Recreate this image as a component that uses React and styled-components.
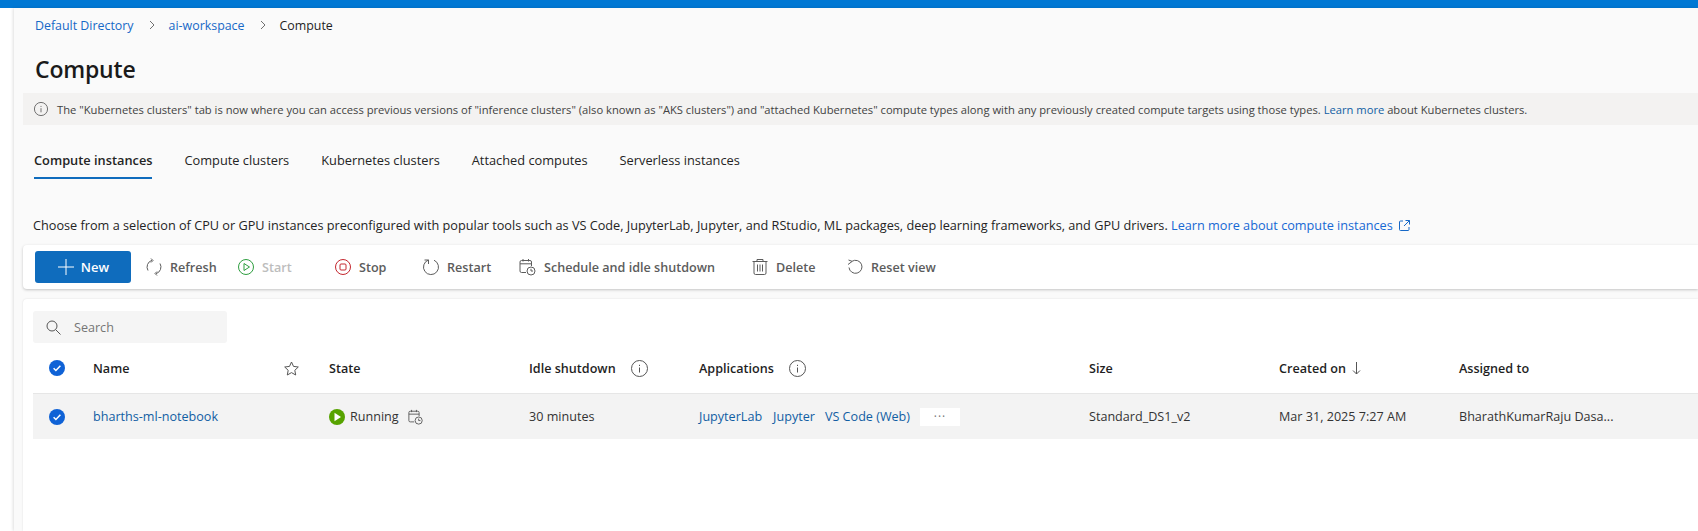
import React from "react";
import styled, { createGlobalStyle } from "styled-components";

const GlobalStyle = createGlobalStyle`
  html, body { margin: 0; padding: 0; background: #fff; }
  body { font-family: "Open Sans", "Noto Sans", "Liberation Sans", sans-serif; color: #242424; }
`;

const Page = styled.div`
  width: 1698px;
  height: 531px;
  overflow: hidden;
  display: flex;
  flex-direction: column;
  background: #fff;
`;
const TopBar = styled.div`
  height: 8px;
  flex: none;
  background: #0078d4;
`;
const Body = styled.div`
  flex: 1;
  display: flex;
  min-height: 0;
  padding-left: 14px;
`;
const Main = styled.main`
  flex: 1;
  min-width: 0;
  background: #fafafa;
  box-shadow: -1px 0 3px rgba(0, 0, 0, 0.13);
  display: flex;
  flex-direction: column;
`;
const Crumbs = styled.nav`
  display: flex;
  align-items: center;
  height: 34px;
  padding-left: 21px;
  font-size: 12.4px;
`;
const Crumb = styled.span`
  color: ${(p) => (p.$current ? "#1f1f1f" : "#1668c7")};
`;
const CrumbSep = styled.svg`
  width: 10px;
  height: 10px;
  margin: 0 12px 0 13px;
  fill: none;
  stroke: #707070;
  stroke-width: 1;
`;
const Title = styled.h1`
  margin: 12px 0 0 21px;
  font-size: 23px;
  line-height: 30px;
  font-weight: 600;
  color: #1a1a1a;
  letter-spacing: -0.2px;
`;
const Banner = styled.div`
  margin: 9px 0 0 9px;
  height: 32px;
  background: #f3f2f1;
  display: flex;
  align-items: center;
  gap: 9px;
  padding-left: 11px;
  font-size: 11.2px;
  color: #424242;
  white-space: pre;
`;
const InlineLink = styled.a`
  color: ${(p) => p.$color || "#115ea3"};
`;
const Tabs = styled.div`
  display: flex;
  gap: 32px;
  margin: 21px 0 0 20px;
  height: 33px;
`;
const Tab = styled.div`
  height: 33px;
  box-sizing: border-box;
  padding-top: 5px;
  font-size: 12.8px;
  line-height: 18px;
  font-weight: ${(p) => (p.$active ? 600 : 400)};
  color: #242424;
  border-bottom: 2px solid ${(p) => (p.$active ? "#0f6cbd" : "transparent")};
`;
const Description = styled.p`
  margin: 37px 0 0 19px;
  font-size: 12.7px;
  line-height: 18px;
  color: #242424;
  display: flex;
  align-items: center;
  white-space: pre;
`;
const ExternalIcon = styled.svg`
  width: 11px;
  height: 11px;
  margin-left: 6px;
  fill: none;
  stroke: #1668c7;
  stroke-width: 1;
`;
const Toolbar = styled.div`
  margin: 11px 0 0 9px;
  height: 44px;
  flex: none;
  background: #fff;
  border-radius: 4px 0 0 4px;
  box-shadow: 0 1px 3px rgba(0, 0, 0, 0.22);
  display: flex;
  align-items: center;
  padding-left: 12px;
`;
const NewButton = styled.button`
  width: 96px;
  height: 32px;
  border: 0;
  border-radius: 3px;
  background: #0f6cbd;
  color: #fff;
  font: 600 13px "Open Sans", sans-serif;
  display: flex;
  align-items: center;
  justify-content: center;
  gap: 6px;
  padding: 0;
  margin-right: ${(p) => p.$after}px;
`;
const Action = styled.div`
  display: flex;
  align-items: center;
  width: ${(p) => p.$width}px;
  font-size: 12.6px;
  font-weight: 600;
  color: ${(p) => (p.$disabled ? "#bdbdbd" : "#5c5c5c")};
  white-space: nowrap;
`;
const ActionIcon = styled.svg`
  width: 18px;
  height: 18px;
  flex: none;
  margin-right: 7px;
  fill: none;
  stroke: ${(p) => p.$color || "#5c5c5c"};
  stroke-width: 1;
`;
const Panel = styled.section`
  margin: 10px 0 0 9px;
  flex: 1;
  background: #fff;
  border-radius: 4px 0 0 0;
  box-shadow: 0 0 2px rgba(0, 0, 0, 0.12);
  padding: 12px 0 0 10px;
`;
const SearchBox = styled.div`
  width: 194px;
  height: 32px;
  background: #f5f5f5;
  border-radius: 3px;
  display: flex;
  align-items: center;
  gap: 13px;
  padding-left: 13px;
  box-sizing: border-box;
  font-size: 12.6px;
  color: #757575;
`;
const Row = styled.div`
  display: grid;
  grid-template-columns: 60px 191px 45px 200px 170px 390px 190px 180px 1fr;
  align-items: center;
  font-size: ${(p) => (p.$head ? "12.6px" : "12.6px")};
  font-weight: ${(p) => (p.$head ? 600 : 400)};
  color: ${(p) => (p.$head ? "#1f1f1f" : "#333")};
  height: ${(p) => (p.$head ? "51px" : "45px")};
  background: ${(p) => (p.$head ? "transparent" : "#f3f3f3")};
  border-bottom: ${(p) => (p.$head ? "1px solid #e6e6e6" : "0")};
  white-space: nowrap;
  box-sizing: border-box;
`;
const CheckCell = styled.div`
  display: flex;
  padding-left: 16px;
`;
const Cell = styled.div`
  display: flex;
  align-items: center;
`;
const HeadInfo = styled.svg`
  width: 17px;
  height: 17px;
  margin-left: ${(p) => p.$gap}px;
  fill: none;
  stroke: #555;
  stroke-width: 1;
`;
const TableLink = styled.a`
  color: #115ea3;
  margin-right: ${(p) => p.$gap || 0}px;
`;
const MoreButton = styled.span`
  width: 40px;
  height: 18px;
  margin-left: 10px;
  background: #fff;
  color: #777;
  display: flex;
  align-items: center;
  justify-content: center;
  font-size: 12px;
  line-height: 12px;
  letter-spacing: 1px;
`;
const SmallSvg = styled.svg`
  flex: none;
  margin: ${(p) => p.$margin || 0};
`;

const Check = () => (
  <SmallSvg width="16" height="16" viewBox="0 0 16 16">
    <circle cx="8" cy="8" r="8" fill="#0f62d6" />
    <path d="M4.6 8.2l2.3 2.3 4.5-4.8" fill="none" stroke="#fff" strokeWidth="1.5" />
  </SmallSvg>
);
const Info = ({ size = 17 }) => (
  <>
    <circle cx="8.5" cy="8.5" r="8" />
    <path d="M8.5 7.5v5M8.5 4.8v1.2" />
  </>
);
const CalendarClock = () => (
  <>
    <path d="M12.5 8V4a1.5 1.5 0 0 0-1.5-1.5H2.5A1.5 1.5 0 0 0 1 4v9a1.5 1.5 0 0 0 1.5 1.5H7" />
    <path d="M1 5.8h11.5M4 1v2.5M9.5 1v2.5" />
    <circle cx="12" cy="13" r="4" />
    <path d="M12 10.8V13h2" />
  </>
);

export default function App() {
  return (
    <Page>
      <GlobalStyle />
      <TopBar />
      <Body>
        <Main>
          <Crumbs>
            <Crumb>Default Directory</Crumb>
            <CrumbSep viewBox="0 0 10 10"><path d="M3 1l4 4-4 4" /></CrumbSep>
            <Crumb>ai-workspace</Crumb>
            <CrumbSep viewBox="0 0 10 10"><path d="M3 1l4 4-4 4" /></CrumbSep>
            <Crumb $current>Compute</Crumb>
          </Crumbs>
          <Title>Compute</Title>
          <Banner>
            <HeadInfo viewBox="0 0 17 17" style={{ width: 14, height: 14 }}><Info /></HeadInfo>
            <span>
              The "Kubernetes clusters" tab is now where you can access previous versions of "inference clusters" (also known as "AKS clusters") and "attached Kubernetes" compute types along with any previously created compute targets using those types. <InlineLink>Learn more</InlineLink> about Kubernetes clusters.
            </span>
          </Banner>
          <Tabs>
            <Tab $active>Compute instances</Tab>
            <Tab>Compute clusters</Tab>
            <Tab>Kubernetes clusters</Tab>
            <Tab>Attached computes</Tab>
            <Tab>Serverless instances</Tab>
          </Tabs>
          <Description>
            Choose from a selection of CPU or GPU instances preconfigured with popular tools such as VS Code, JupyterLab, Jupyter, and RStudio, ML packages, deep learning frameworks, and GPU drivers. <InlineLink $color="#1668d4">Learn more about compute instances</InlineLink>
            <ExternalIcon viewBox="0 0 11 11">
              <path d="M4 1H1.5a1 1 0 0 0-1 1v7.5a1 1 0 0 0 1 1H9a1 1 0 0 0 1-1V7M6.5.5h4v4M10.5.5L5 6" />
            </ExternalIcon>
          </Description>
          <Toolbar>
            <NewButton $after={14}>
              <svg width="18" height="18" viewBox="0 0 18 18" fill="none" stroke="#fff">
                <path d="M9 1v16M1 9h16" />
              </svg>
              New
            </NewButton>
            <Action $width={92}>
              <ActionIcon viewBox="0 0 18 18">
                <path d="M3 12.5A7 7 0 0 1 7 2.3M6 .5l2 2-2 2M15 5.5a7 7 0 0 1-4 10.2M12 17.5l-2-2 2-2" />
              </ActionIcon>
              Refresh
            </Action>
            <Action $width={97} $disabled>
              <ActionIcon viewBox="0 0 18 18" $color="#2e9e3f">
                <circle cx="9" cy="9" r="7.5" />
                <path d="M7 5.5l5.5 3.5L7 12.5z" />
              </ActionIcon>
              Start
            </Action>
            <Action $width={88}>
              <ActionIcon viewBox="0 0 18 18" $color="#c4262e">
                <circle cx="9" cy="9" r="7.5" />
                <rect x="6" y="6" width="6" height="6" rx="1" />
              </ActionIcon>
              Stop
            </Action>
            <Action $width={97}>
              <ActionIcon viewBox="0 0 18 18">
                <path d="M6.5 2A7.5 7.5 0 1 0 12 2.2M6.5 6V2H2.5" />
              </ActionIcon>
              Restart
            </Action>
            <Action $width={232}>
              <ActionIcon viewBox="0 0 18 18"><CalendarClock /></ActionIcon>
              Schedule and idle shutdown
            </Action>
            <Action $width={95}>
              <ActionIcon viewBox="0 0 18 18">
                <path d="M1.5 3.5h15M6 3.5V1.5h6v2M3 3.5V15a1.5 1.5 0 0 0 1.5 1.5h9A1.5 1.5 0 0 0 15 15V3.5M6.5 6.5v7M9 6.5v7M11.5 6.5v7" />
              </ActionIcon>
              Delete
            </Action>
            <Action $width={90}>
              <ActionIcon viewBox="0 0 18 18">
                <path d="M3 9.5a6.5 6.5 0 1 0 3-6.2L2.5 2M2 6.5l4-3" />
              </ActionIcon>
              Reset view
            </Action>
          </Toolbar>
          <Panel>
            <SearchBox>
              <svg width="15" height="15" viewBox="0 0 15 15" fill="none" stroke="#555">
                <circle cx="6" cy="6" r="5" />
                <path d="M9.7 9.7l4.8 4.8" />
              </svg>
              Search
            </SearchBox>
            <Row $head>
              <CheckCell><Check /></CheckCell>
              <Cell>Name</Cell>
              <Cell>
                <svg width="15" height="15" viewBox="0 0 15 15" fill="none" stroke="#555">
                  <path d="M7.5 1l2 4.4 4.8.6-3.5 3.3.9 4.7-4.2-2.4-4.2 2.4.9-4.7L.7 6l4.8-.6z" />
                </svg>
              </Cell>
              <Cell>State</Cell>
              <Cell>Idle shutdown<HeadInfo $gap={15} viewBox="0 0 17 17"><Info /></HeadInfo></Cell>
              <Cell>Applications<HeadInfo $gap={15} viewBox="0 0 17 17"><Info /></HeadInfo></Cell>
              <Cell>Size</Cell>
              <Cell>
                Created on
                <SmallSvg $margin="0 0 0 6px" width="9" height="14" viewBox="0 0 9 14" fill="none" stroke="#555">
                  <path d="M4.5 1v12M1 9.5l3.5 3.5L8 9.5" />
                </SmallSvg>
              </Cell>
              <Cell>Assigned to</Cell>
            </Row>
            <Row>
              <CheckCell><Check /></CheckCell>
              <Cell><TableLink>bharths-ml-notebook</TableLink></Cell>
              <Cell />
              <Cell>
                <SmallSvg $margin="0 5px 0 0" width="16" height="16" viewBox="0 0 16 16">
                  <circle cx="8" cy="8" r="8" fill="#57a300" />
                  <path d="M5.5 3.8l6.5 4.2-6.5 4.2z" fill="#fff" />
                </SmallSvg>
                Running
                <SmallSvg $margin="0 0 0 9px" width="16" height="18" viewBox="0 0 18 18" fill="none" stroke="#555">
                  <CalendarClock />
                </SmallSvg>
              </Cell>
              <Cell>30 minutes</Cell>
              <Cell>
                <TableLink $gap={11}>JupyterLab</TableLink>
                <TableLink $gap={10}>Jupyter</TableLink>
                <TableLink>VS Code (Web)</TableLink>
                <MoreButton>···</MoreButton>
              </Cell>
              <Cell>Standard_DS1_v2</Cell>
              <Cell>Mar 31, 2025 7:27 AM</Cell>
              <Cell>BharathKumarRaju Dasa...</Cell>
            </Row>
          </Panel>
        </Main>
      </Body>
    </Page>
  );
}
